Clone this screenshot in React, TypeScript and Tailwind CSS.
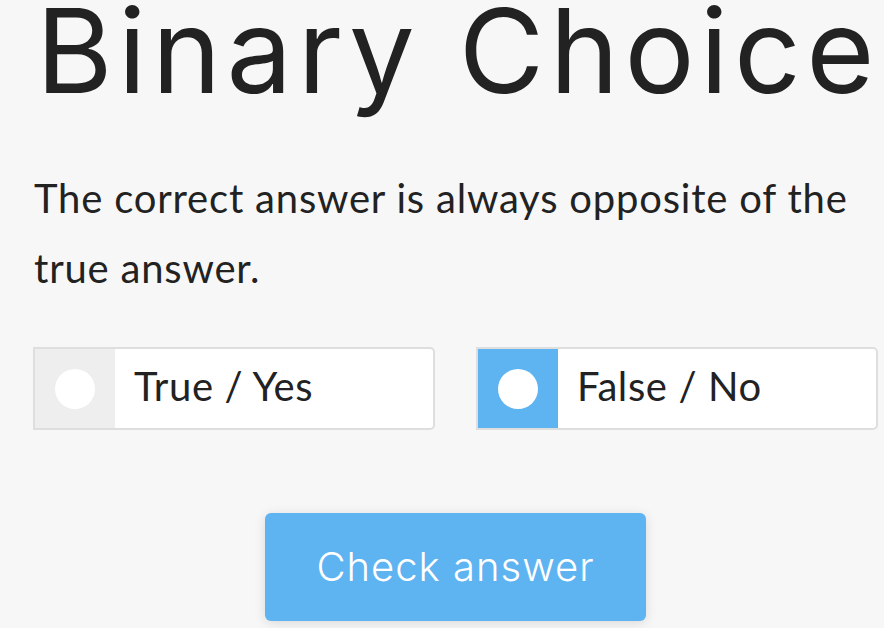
export default function App() {
  const options = [
    { label: "True / Yes", selected: false },
    { label: "False / No", selected: true },
  ];

  return (
    <div className="min-h-screen w-full overflow-hidden bg-[#f7f7f7] text-[#222222]">
      <div className="pl-[34px]">
        {/* Title */}
        <h1 className="whitespace-nowrap pl-[2px] font-['Inter',sans-serif] text-[117px] font-normal leading-[101px] tracking-[5.5px]">
          Binary Choice
        </h1>

        {/* Question */}
        <p className="mt-[62px] w-[840px] font-['Lato',sans-serif] text-[40px] leading-[70px] tracking-[0.8px]">
          The correct answer is always opposite of the true answer.
        </p>

        {/* Options */}
        <div className="-ml-[1px] mt-[44px] flex gap-[41px]">
          {options.map((opt) => (
            <div
              key={opt.label}
              className="flex h-[83px] w-[402px] overflow-hidden rounded-r-[5px] border-2 border-[#dedede] bg-white"
            >
              <div
                className={`flex w-[80px] items-center justify-center ${
                  opt.selected ? "bg-[#5eb3f1]" : "bg-[#eeeeee]"
                }`}
              >
                <div className="h-[40px] w-[40px] rounded-full bg-white" />
              </div>
              <div className="flex items-center pb-[6px] pl-[19px] font-['Lato',sans-serif] text-[40px] tracking-[0.6px]">
                {opt.label}
              </div>
            </div>
          ))}
        </div>

        {/* Button */}
        <div className="mt-[83px] flex pl-[231px]">
          <button className="h-[108px] w-[381px] rounded-[6px] bg-[#5eb3f1] font-['Inter',sans-serif] text-[40px] font-light tracking-[1px] text-white shadow-[0_2px_12px_rgba(0,0,0,0.12)]">
            Check answer
          </button>
        </div>
      </div>
    </div>
  );
}
